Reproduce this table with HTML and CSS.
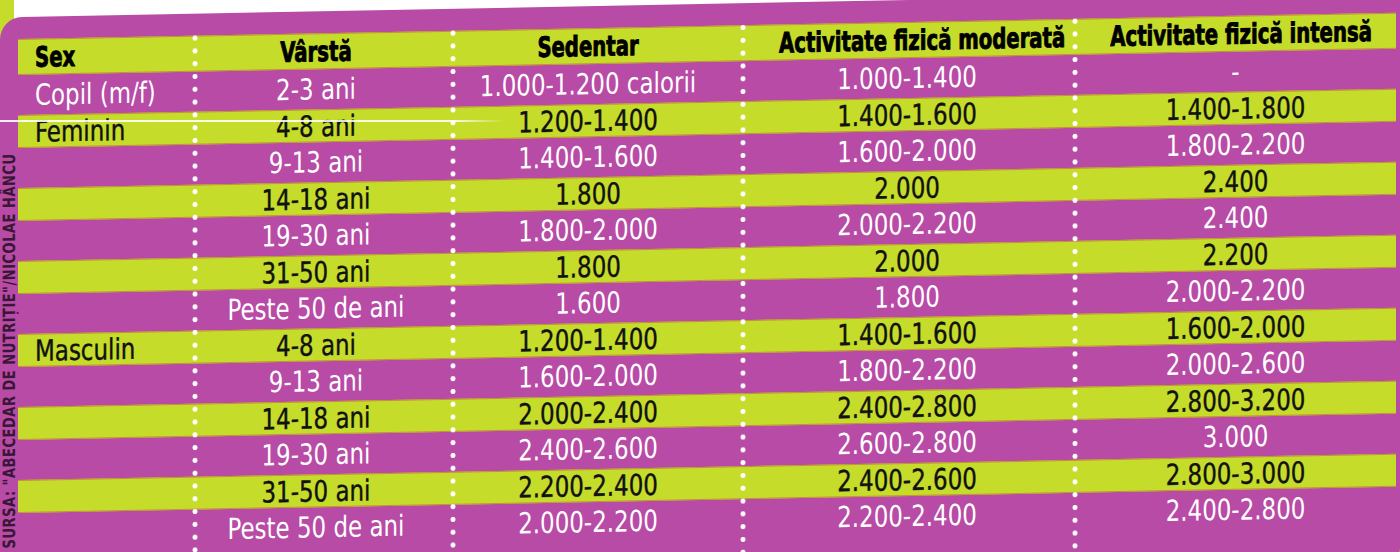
FILE: index.html
```html
<!DOCTYPE html>
<html lang="ro">
<head>
<meta charset="utf-8">
<title>Necesar caloric</title>
<link rel="stylesheet" href="styles.css">
</head>
<body>
<div class="page">
  <div class="card">
    <div class="source"><span>SURSA: "ABECEDAR DE NUTRIȚIE"/NICOLAE HÂNCU</span></div>
    <div class="table">
      <div class="row head">
        <div class="c c1">Sex</div><div class="c c2">Vârstă</div><div class="c c3">Sedentar</div><div class="c c4">Activitate fizică moderată</div><div class="c c5">Activitate fizică intensă</div>
      </div>
      <div class="row p">
        <div class="c c1">Copil (m/f)</div><div class="c c2">2-3 ani</div><div class="c c3">1.000-1.200 calorii</div><div class="c c4">1.000-1.400</div><div class="c c5">-</div>
      </div>
      <div class="row l">
        <div class="c c1">Feminin</div><div class="c c2">4-8 ani</div><div class="c c3">1.200-1.400</div><div class="c c4">1.400-1.600</div><div class="c c5">1.400-1.800</div>
      </div>
      <div class="row p">
        <div class="c c1"></div><div class="c c2">9-13 ani</div><div class="c c3">1.400-1.600</div><div class="c c4">1.600-2.000</div><div class="c c5">1.800-2.200</div>
      </div>
      <div class="row l">
        <div class="c c1"></div><div class="c c2">14-18 ani</div><div class="c c3">1.800</div><div class="c c4">2.000</div><div class="c c5">2.400</div>
      </div>
      <div class="row p">
        <div class="c c1"></div><div class="c c2">19-30 ani</div><div class="c c3">1.800-2.000</div><div class="c c4">2.000-2.200</div><div class="c c5">2.400</div>
      </div>
      <div class="row l">
        <div class="c c1"></div><div class="c c2">31-50 ani</div><div class="c c3">1.800</div><div class="c c4">2.000</div><div class="c c5">2.200</div>
      </div>
      <div class="row p">
        <div class="c c1"></div><div class="c c2">Peste 50 de ani</div><div class="c c3">1.600</div><div class="c c4">1.800</div><div class="c c5">2.000-2.200</div>
      </div>
      <div class="row l">
        <div class="c c1">Masculin</div><div class="c c2">4-8 ani</div><div class="c c3">1.200-1.400</div><div class="c c4">1.400-1.600</div><div class="c c5">1.600-2.000</div>
      </div>
      <div class="row p">
        <div class="c c1"></div><div class="c c2">9-13 ani</div><div class="c c3">1.600-2.000</div><div class="c c4">1.800-2.200</div><div class="c c5">2.000-2.600</div>
      </div>
      <div class="row l">
        <div class="c c1"></div><div class="c c2">14-18 ani</div><div class="c c3">2.000-2.400</div><div class="c c4">2.400-2.800</div><div class="c c5">2.800-3.200</div>
      </div>
      <div class="row p">
        <div class="c c1"></div><div class="c c2">19-30 ani</div><div class="c c3">2.400-2.600</div><div class="c c4">2.600-2.800</div><div class="c c5">3.000</div>
      </div>
      <div class="row l">
        <div class="c c1"></div><div class="c c2">31-50 ani</div><div class="c c3">2.200-2.400</div><div class="c c4">2.400-2.600</div><div class="c c5">2.800-3.000</div>
      </div>
      <div class="row p">
        <div class="c c1"></div><div class="c c2">Peste 50 de ani</div><div class="c c3">2.000-2.200</div><div class="c c4">2.200-2.400</div><div class="c c5">2.400-2.800</div>
      </div>
    </div>
  </div>
  <div class="scanline"></div>
</div>
</body>
</html>
```
FILE: styles.css
```css
* { box-sizing: border-box; }
html, body { margin: 0; padding: 0; }
body {
  width: 1400px;
  height: 552px;
  overflow: hidden;
  background:
    linear-gradient(#ffffff, #ffffff) 14px 0 / 1386px 60px no-repeat,
    #c6dc2b;
  font-family: "DejaVu Sans Condensed", "Liberation Sans Narrow", "Liberation Sans", sans-serif;
}
.page {
  position: relative;
  width: 1400px;
  height: 552px;
  padding-top: 4px;
  overflow: hidden;
}
.card {
  display: flex;
  width: 1400px;
  background: #b84ba6;
  border-radius: 22px 0 16px 0;
  padding: 22px 4px 10px 0;
  transform: skewY(-1.1deg);
  transform-origin: 700px 50%;
}
.source {
  width: 18px;
  display: flex;
  align-items: center;
  justify-content: center;
  padding: 82px 0 0 0;
}
.source span {
  writing-mode: vertical-rl;
  transform: rotate(180deg) scaleY(0.86);
  font-weight: bold;
  font-size: 17px;
  letter-spacing: 0.5px;
  line-height: 18px;
  color: #3a1736;
  white-space: nowrap;
}
.table {
  position: relative;
  width: 1378px;
}
.table::after {
  content: "";
  position: absolute;
  inset: -4px 0 0 0;
  pointer-events: none;
  background:
    radial-gradient(circle, #fff 2.2px, rgba(255,255,255,0) 2.9px) 174px 0 / 6px 12.8px repeat-y,
    radial-gradient(circle, #fff 2.2px, rgba(255,255,255,0) 2.9px) 432px 0 / 6px 12.8px repeat-y,
    radial-gradient(circle, #fff 2.2px, rgba(255,255,255,0) 2.9px) 722px 0 / 6px 12.8px repeat-y,
    radial-gradient(circle, #fff 2.2px, rgba(255,255,255,0) 2.9px) 1054px 0 / 6px 12.8px repeat-y;
}
.row {
  --sx: 0.88;
  display: grid;
  grid-template-columns: 177px 258px 290px 332px 321px;
  align-items: center;
  font-size: 29px;
  line-height: 1;
}
.row.p {
  height: 40px;
  color: #ffffff;
}
.row.l, .row.head {
  height: 33px;
  background: #c6dc2b;
  color: #111111;
  border-top: 1px solid #c2923a;
  border-bottom: 1px solid #c2923a;
  -webkit-text-stroke: 0.4px #111111;
}
.row.head {
  --sx: 0.78;
  height: 36px;
  font-weight: bold;
  font-size: 28px;
  -webkit-text-stroke: 0.9px #000;
  color: #000;
}
.c {
  --pr: 0px;
  white-space: nowrap;
  text-align: center;
  padding-top: 1px;
  padding-right: var(--pr);
  transform: scaleX(var(--sx));
  transform-origin: calc((100% - var(--pr)) / 2) 50%;
}
.c1 { text-align: left; padding-left: 17px; transform-origin: 17px 50%; }
.c2 { --pr: 16px; }
.c3 { --pr: 20px; }
.c4 { --pr: 4px; }
.c5 { --pr: 0px; }
.scanline {
  position: absolute;
  left: 0;
  top: 120px;
  width: 505px;
  height: 2px;
  background: linear-gradient(to right, rgba(255,255,255,0.9) 0, rgba(255,255,255,0.85) 90%, rgba(255,255,255,0) 100%);
}
```
